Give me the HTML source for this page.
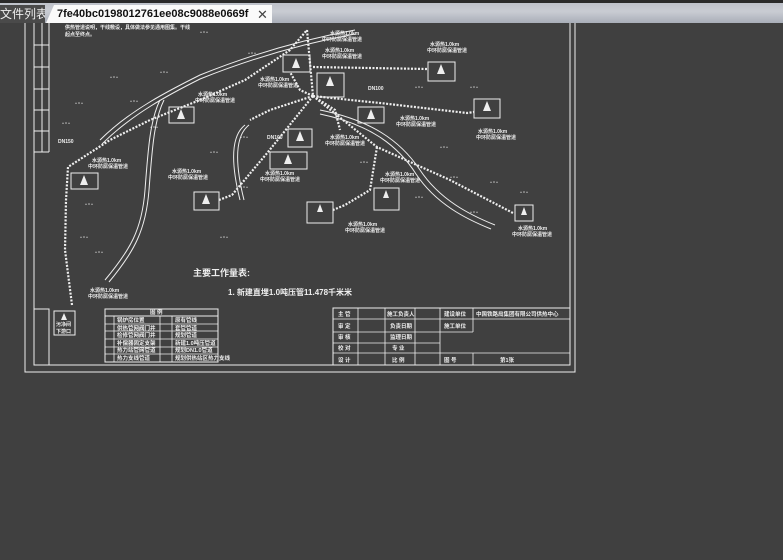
<!DOCTYPE html>
<html><head><meta charset="utf-8"><style>
html,body{margin:0;padding:0;width:783px;height:560px;overflow:hidden;background:#404040;font-family:"Liberation Sans","Noto Sans CJK SC",sans-serif}
.bar{position:absolute;left:0;top:0;width:783px;height:23px;background:linear-gradient(#b9bdc6,#c9ccd3 50%,#a9aeb8);}
.top{position:absolute;left:0;top:0;width:783px;height:3px;background:#2a2a2a}
.t1{position:absolute;left:0;top:5px;width:45px;height:18px;background:#4a4a4a;color:#eee;font-size:12px;line-height:18px;white-space:nowrap;overflow:hidden}
.t2{position:absolute;left:46px;top:5px;width:226px;height:18px;background:#fafafa;clip-path:polygon(8px 0,100% 0,100% 100%,0 100%);font:bold 11px "Liberation Sans",sans-serif;line-height:19px;color:#111;white-space:nowrap;overflow:hidden}
svg{position:absolute;left:0;top:23px}
</style></head><body>
<div class="bar"></div><div class="top"></div>
<div class="t1">文件列表</div>
<div class="t2"><span style="position:absolute;left:11px;top:0">7fe40bc0198012761ee08c9088e0669f</span><span style="position:absolute;left:211px;top:0;font-weight:normal;font-size:13px;color:#444">✕</span></div>
<svg width="783" height="537" viewBox="0 23 783 537" font-family="Liberation Sans,Noto Sans CJK SC,sans-serif" fill="none" stroke="#eee" stroke-width="1">
<polyline points="25,23 25,372 575,372 575,23"/>
<polyline points="34,23 34,365 570,365 570,23"/>
<line x1="49" y1="23" x2="49" y2="152"/><line x1="42" y1="23" x2="42" y2="152"/>
<g stroke-width="1"><line x1="34" y1="45" x2="49" y2="45"/><line x1="34" y1="67" x2="49" y2="67"/><line x1="34" y1="89" x2="49" y2="89"/><line x1="34" y1="110" x2="49" y2="110"/><line x1="34" y1="131" x2="49" y2="131"/><line x1="34" y1="152" x2="49" y2="152"/></g>
<rect x="34" y="309" width="15" height="56"/>
<g stroke-width="1">
<path d="M160,100 C150,120 148,150 145,190 C142,230 130,250 105,280"/>
<path d="M164,100 C154,120 152,150 149,190 C146,230 134,252 109,282"/>
<path d="M245,125 C232,135 230,160 240,200 "/>
<path d="M249,125 C236,135 234,160 244,200"/>
<path d="M320,110 C370,120 400,140 420,170 C440,200 470,215 495,225"/>
<path d="M320,114 C368,124 397,144 416,174 C436,204 466,219 491,229"/>
<path d="M355,30 C300,40 250,55 200,75 C170,90 130,110 100,140"/>
<path d="M355,34 C300,44 250,59 200,79 C170,94 132,114 102,144"/>
</g>
<g stroke-width="2.2" stroke-dasharray="2,1.5">
<polyline points="72,305 65,250 66,200 68,167 110,140 150,120 200,100 245,80 290,50 307,30"/>
<polyline points="307,30 313,96"/>
<polyline points="313,96 360,101 380,103 467,113 474,112"/>
<polyline points="313,67 427,69"/>
<polyline points="313,96 377,147 450,180 513,213"/>
<polyline points="313,96 268,152 232,195 219,200"/>
<polyline points="377,147 370,190 345,205 333,210"/>
<polyline points="313,96 270,110 250,120"/>
<polyline points="313,96 300,90 290,72"/>
<polyline points="313,96 335,110 340,130"/>
</g>
<g stroke-width="1">
<rect x="283" y="55" width="27" height="17"/><rect x="317" y="73" width="27" height="24"/>
<rect x="358" y="107" width="26" height="16"/><rect x="288" y="129" width="24" height="18"/>
<rect x="270" y="152" width="37" height="17"/><rect x="307" y="202" width="26" height="21"/>
<rect x="374" y="188" width="25" height="22"/><rect x="428" y="62" width="27" height="19"/>
<rect x="474" y="99" width="26" height="19"/><rect x="515" y="205" width="18" height="16"/>
<rect x="194" y="192" width="25" height="18"/><rect x="169" y="107" width="25" height="16"/>
<rect x="71" y="173" width="27" height="16"/><rect x="54" y="311" width="21" height="24"/>
</g>
<g fill="#eee" stroke="none">
<path d="M296,58 l-4,10 h8z M330,76 l-4,10 h8z M371,109 l-4,10 h8z M300,131 l-4,10 h8z M288,154 l-4,10 h8z M320,204 l-3,8 h6z M386,190 l-3,8 h6z M441,64 l-4,10 h8z M487,101 l-4,10 h8z M524,207 l-3,8 h6z M206,194 l-4,10 h8z M181,109 l-4,10 h8z M84,175 l-4,10 h8z M64,313 l-3,7 h6z"/>
</g>
<g fill="#eee" stroke="none" font-size="5" font-weight="bold">
<text x="65" y="29">供热管道说明，干线敷设，具体做法参见通用图集。干线</text>
<text x="65" y="36">起点至终点。</text>
<text x="330" y="35">水源热1.0km</text><text x="322" y="41">中环防腐保温管道</text>
<text x="325" y="52">水源热1.0km</text><text x="322" y="58">中环防腐保温管道</text>
<text x="430" y="46">水源热1.0km</text><text x="427" y="52">中环防腐保温管道</text>
<text x="260" y="81">水源热1.0km</text><text x="258" y="87">中环防腐保温管道</text>
<text x="198" y="96">水源热1.0km</text><text x="195" y="102">中环防腐保温管道</text>
<text x="478" y="133">水源热1.0km</text><text x="476" y="139">中环防腐保温管道</text>
<text x="400" y="120">水源热1.0km</text><text x="396" y="126">中环防腐保温管道</text>
<text x="330" y="139">水源热1.0km</text><text x="325" y="145">中环防腐保温管道</text>
<text x="265" y="175">水源热1.0km</text><text x="260" y="181">中环防腐保温管道</text>
<text x="385" y="176">水源热1.0km</text><text x="380" y="182">中环防腐保温管道</text>
<text x="348" y="226">水源热1.0km</text><text x="345" y="232">中环防腐保温管道</text>
<text x="518" y="230">水源热1.0km</text><text x="512" y="236">中环防腐保温管道</text>
<text x="92" y="162">水源热1.0km</text><text x="88" y="168">中环防腐保温管道</text>
<text x="172" y="173">水源热1.0km</text><text x="168" y="179">中环防腐保温管道</text>
<text x="90" y="292">水源热1.0km</text><text x="88" y="298">中环防腐保温管道</text>
<text x="58" y="143">DN150</text><text x="368" y="90">DN100</text><text x="267" y="139">DN100</text>
<text x="56" y="326">污净间</text><text x="56" y="333">下游口</text>
</g>
<g fill="#eee" stroke="none" font-size="5" letter-spacing="1">
<text x="200" y="35">ᐤ°ᐤ</text><text x="248" y="56">ᐤ°ᐤ</text><text x="110" y="80">ᐤ°ᐤ</text><text x="160" y="75">ᐤ°ᐤ</text>
<text x="75" y="106">ᐤ°ᐤ</text><text x="62" y="126">ᐤ°ᐤ</text><text x="130" y="104">ᐤ°ᐤ</text><text x="150" y="130">ᐤ°ᐤ</text>
<text x="210" y="155">ᐤ°ᐤ</text><text x="240" y="140">ᐤ°ᐤ</text><text x="415" y="90">ᐤ°ᐤ</text><text x="470" y="90">ᐤ°ᐤ</text>
<text x="440" y="150">ᐤ°ᐤ</text><text x="450" y="180">ᐤ°ᐤ</text><text x="490" y="185">ᐤ°ᐤ</text><text x="520" y="195">ᐤ°ᐤ</text>
<text x="85" y="207">ᐤ°ᐤ</text><text x="240" y="190">ᐤ°ᐤ</text><text x="360" y="165">ᐤ°ᐤ</text><text x="415" y="200">ᐤ°ᐤ</text>
<text x="470" y="215">ᐤ°ᐤ</text><text x="220" y="240">ᐤ°ᐤ</text><text x="80" y="240">ᐤ°ᐤ</text><text x="95" y="255">ᐤ°ᐤ</text>
</g>
<g fill="#eee" stroke="none" font-weight="bold">
<text x="193" y="276" font-size="9">主要工作量表:</text>
<text x="228" y="295" font-size="8">1. 新建直埋1.0吨压管11.478千米米</text>
</g>
<rect x="105" y="309" width="113" height="53"/>
<line x1="105" y1="316" x2="218" y2="316"/>
<g stroke-width="0.8">
<line x1="105" y1="324" x2="218" y2="324"/><line x1="105" y1="331" x2="218" y2="331"/><line x1="105" y1="339" x2="218" y2="339"/><line x1="105" y1="347" x2="218" y2="347"/><line x1="105" y1="354" x2="218" y2="354"/>
<line x1="114" y1="316" x2="114" y2="362"/><line x1="160" y1="316" x2="160" y2="362"/><line x1="172" y1="316" x2="172" y2="362"/>
</g>
<g fill="#eee" stroke="none" font-size="5.5" font-weight="bold">
<text x="150" y="314">图 例</text>
<text x="117" y="322">锅炉房位置</text><text x="175" y="322">原有管线</text>
<text x="117" y="330">供热管网阀门井</text><text x="175" y="330">套管管道</text>
<text x="117" y="337">检修管网阀门井</text><text x="175" y="337">规划管道</text>
<text x="117" y="345">补偿器固定支架</text><text x="175" y="345">新建1.0吨压管道</text>
<text x="117" y="352">热力站管网管道</text><text x="175" y="352">规划DN1.0管道</text>
<text x="117" y="360">热力支线管道</text><text x="175" y="360">规划供热站区热力支线</text>
</g>
<rect x="333" y="308" width="237" height="57"/>
<g stroke-width="0.8">
<line x1="333" y1="319" x2="570" y2="319"/><line x1="333" y1="332" x2="473" y2="332"/><line x1="333" y1="343" x2="440" y2="343"/><line x1="333" y1="353" x2="570" y2="353"/>
<line x1="358" y1="308" x2="358" y2="365"/><line x1="385" y1="308" x2="385" y2="365"/><line x1="415" y1="308" x2="415" y2="365"/><line x1="440" y1="308" x2="440" y2="365"/><line x1="473" y1="308" x2="473" y2="332"/><line x1="473" y1="353" x2="473" y2="365"/>
</g>
<g fill="#eee" stroke="none" font-size="5.5" font-weight="bold">
<text x="338" y="316">主 管</text><text x="387" y="316">施工负责人</text><text x="444" y="316">建设单位</text><text x="476" y="316">中国铁路局集团有限公司供热中心</text>
<text x="338" y="328">审 定</text><text x="390" y="328">负责日期</text><text x="444" y="328">施工单位</text>
<text x="338" y="339">审 核</text><text x="390" y="339">监理日期</text>
<text x="338" y="350">校 对</text><text x="392" y="350">专 业</text>
<text x="338" y="362">设 计</text><text x="392" y="362">比 例</text><text x="444" y="362">图 号</text><text x="500" y="362">第1张</text>
</g>
</svg>
</body></html>
